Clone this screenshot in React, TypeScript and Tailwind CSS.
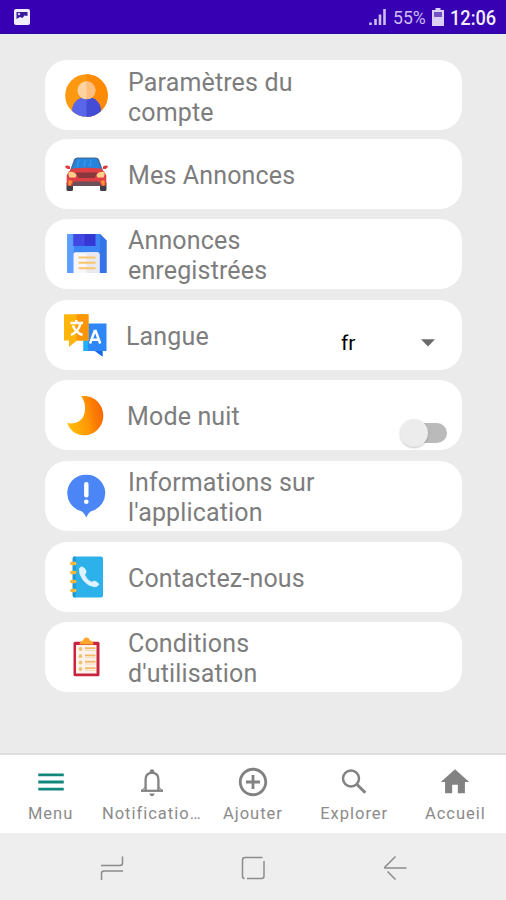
import type { ReactNode } from 'react';
import { MdAddCircleOutline, MdHome, MdMenu } from 'react-icons/md';

type MenuItem = {
  label: string;
  icon: ReactNode;
  textClass: string;
  extra?: ReactNode;
};

const iconClass = 'w-[44px] h-[44px] shrink-0';

const AccountIcon = () => (
  <svg viewBox="0 0 44 44" className={iconClass}>
    <defs>
      <clipPath id="avatar">
        <circle cx="22.5" cy="22.5" r="21.3" />
      </clipPath>
    </defs>
    <g clipPath="url(#avatar)">
      <rect width="44" height="44" fill="#ff9811" />
      <path d="M22.5 0H44v44H22.5z" fill="#ff8a05" />
      <path d="M8 44V38c0-8 6-14 14.5-14S37 30 37 38v6z" fill="#5a66ea" />
      <path d="M22.5 24C31 24 37 30 37 38v6H22.5z" fill="#444cd6" />
      <circle cx="22.5" cy="17.3" r="9" fill="#ffd3a0" />
      <path d="M22.5 8.3a9 9 0 0 1 0 18z" fill="#ffbe7e" />
    </g>
  </svg>
);

const CarIcon = () => (
  <svg viewBox="0 0 44 44" className={iconClass}>
    <rect x="2.5" y="30" width="6.5" height="9" rx="1.5" fill="#3f3f46" />
    <rect x="36" y="30" width="6.5" height="9" rx="1.5" fill="#3f3f46" />
    <path d="M10 7.5Q11 5.500 13.500 5.500H31.500Q34 5.500 35 7.500L39.500 20H5.500z" fill="#46698f" />
    <path d="M11.300 8.500Q11.800 6.500 13.500 6.500H31.500Q33.200 6.500 33.700 8.500L37.500 17.500H7.500z" fill="#2585dc" />
    <path d="M15 8l-2 7M21 8l-1 7M27 8l-1 7" stroke="#3c97e6" strokeWidth="1.3" />
    <path d="M1 14Q3.500 13 6 14.500v2.500H3.500Q1.500 16.500 1 14zM44 14Q41.500 13 39 14.500v2.500h2.500Q43.500 16.500 44 14z" fill="#e0393e" />
    <path d="M8 16.500Q22.500 15 37 16.500Q41 19.500 42.300 23.500V31.500Q42.300 34 40 34H5Q2.700 34 2.700 31.500V23.500Q4 19.500 8 16.500z" fill="#df4045" />
    <path d="M11.500 20.500h22L30.500 26H14.500z" fill="#87383c" />
    <path d="M4.500 20Q10 19 12.500 23L11.500 25.500H5.500Q4 23 4.500 20zM40.500 20Q35 19 32.500 23l1 2.500h6Q41 23 40.500 20z" fill="#ffd08a" />
    <path d="M10 29.500h25l2.500 4.500H7.500z" fill="#6b5059" />
    <path d="M4.500 28l4 1-2 4.500h-2zM40.500 28l-4 1 2 4.500h2z" fill="#f59a32" />
  </svg>
);

const SaveIcon = () => (
  <svg viewBox="0 0 44 44" className={iconClass}>
    <path d="M3.3 2H36L42.5 8.500V41H3.3z" fill="#3d84f5" />
    <path d="M3.3 2H10V41H3.3z" fill="#5c9dff" />
    <path d="M36 2l6.5 6.500V41H36z" fill="#3474e6" />
    <path d="M9.5 2H31.5V14H9.5z" fill="#3437d4" />
    <path d="M9.5 2H20.5V14H9.5z" fill="#4249e2" />
    <path d="M9.5 41V22.500Q9.5 20.300 11.5 20.300H33Q35.5 20.300 35.5 22.500V41z" fill="#f7f7f9" />
    <path d="M22.5 20.300H33Q35.5 20.300 35.5 22.500V41H22.5z" fill="#e9e9ef" />
    <path d="M14.5 25.500h17M14.5 30.800h17M14.5 36.200h17" stroke="#fbc56c" strokeWidth="1.9" />
  </svg>
);

const LanguageIcon = () => (
  <svg viewBox="0 0 44 44" className={iconClass}>
    <path d="M19.5 10.500H42.5V38H38.500V43.500L31 38H19.500z" fill="#2f86f6" />
    <path d="M19.500 20H24V38H19.500z" fill="#1fb0f5" />
    <path d="M31 38h7.500v5.500z" fill="#1768e0" />
    <path d="M0 1.300H24.500V27.500H13L5 34V27.500H0z" fill="#ffb50a" />
    <path d="M12.500 1.300h12V27.500h-12z" fill="#fb9608" />
    <path d="M6.500 10h12.500M12.300 7v3M16.500 10.500Q14.500 18.500 7 22M8.800 12.500Q11.500 19.500 18.500 22" fill="none" stroke="#fff" strokeWidth="2.400" />
    <path d="M26 30.500L30.700 18h1L36.200 30.500M27.800 26.800h7" fill="none" stroke="#fff" strokeWidth="2.500" />
  </svg>
);

const MoonIcon = () => (
  <svg viewBox="0 0 44 44" className={iconClass}>
    <defs>
      <linearGradient id="moon" x1="0" y1="0.6" x2="1" y2="0.4">
        <stop offset="0" stopColor="#ffbd08" />
        <stop offset="0.5" stopColor="#ff9a06" />
        <stop offset="0.75" stopColor="#fc7b04" />
        <stop offset="1" stopColor="#f56a00" />
      </linearGradient>
    </defs>
    <path d="M17.200 3.200C29.500 1.500 39.300 11 39.300 22.500C39.300 33.500 31 42.300 20 42.300C12 42.300 5.500 37.500 3.300 29.800C9 31.500 15.500 29.500 18.800 24.500C22.500 18 21.500 9 17.200 3.200z" fill="url(#moon)" />
  </svg>
);

const InfoIcon = () => (
  <svg viewBox="0 0 44 44" className={iconClass}>
    <path d="M22.300 0.700A18.500 18.500 0 0 1 27 37.200Q24.500 38.500 22.300 43.500Q20 38.500 17.500 37.200A18.500 18.500 0 0 1 22.300 0.700z" fill="#4c86f6" />
    <rect x="20.100" y="8" width="4.400" height="15.500" rx="2" fill="#fff" />
    <circle cx="22.300" cy="27.700" r="2.300" fill="#fff" />
  </svg>
);

const ContactIcon = () => (
  <svg viewBox="0 0 44 44" className={iconClass}>
    <rect x="8.700" y="1.500" width="30.300" height="41" rx="2" fill="#2cb1ea" />
    <path d="M8.700 3.500q0-2 2-2h1v41h-1q-2 0-2-2z" fill="#1d9ad6" />
    {[8.5, 17.5, 26.5, 35.5].map((y) => (
      <rect key={y} x="6" y={y - 1.7} width="6.500" height="3.400" rx="1.700" fill="#f8b739" />
    ))}
    <path d="M15.500 13.500Q16.500 11.500 18.500 12Q22 14 22.200 17Q21 19 20.700 20Q23 25.500 27.500 27.200L30.500 26Q34 27 34.800 29.500Q33.500 32 30.500 31.800Q24 31 19.500 25.500Q14.500 19 15.500 13.500z" fill="#def2ff" stroke="#def2ff" strokeWidth="0.800" />
  </svg>
);

const TermsIcon = () => (
  <svg viewBox="0 0 44 44" className={iconClass}>
    <rect x="9.500" y="6.700" width="26" height="34.500" rx="1.500" fill="#c9233f" />
    <rect x="12" y="10" width="20.500" height="28.500" fill="#fdf3ea" />
    <path d="M15.500 9.500Q15.500 6 19 5.500Q20 2.500 22.500 2.500T26 5.500Q29.500 6 29.500 9.500z" fill="#fca72c" />
    {[14, 21.2, 27.5, 34].map((y) => (
      <g key={y}>
        <circle cx="16.500" cy={y} r="1.900" fill="#efc177" />
        <path d={`M21 ${y - 0.8}h10.500`} stroke="#f4b767" strokeWidth="1.800" />
        <path d={`M21 ${y + 1.5}h10.500`} stroke="#f4dcbb" strokeWidth="1" />
      </g>
    ))}
  </svg>
);

const BellIcon = ({ className }: { className?: string }) => (
  <svg viewBox="0 0 34 34" className={className} fill="none" stroke="currentColor">
    <path d="M10.600 25V14.500Q10.600 7.800 17 7.800T23.400 14.500V25" strokeWidth="2.300" />
    <path d="M6 26.800v-1.300l3.700-3.500h1M28 26.800v-1.300L24.300 22h-1" fill="currentColor" stroke="none" />
    <path d="M6 25.800h22" strokeWidth="2.200" />
    <path d="M14.700 8V6.500Q14.700 4.200 17 4.200T19.300 6.500V8z" fill="currentColor" stroke="none" />
    <path d="M14.300 28.600h5.400q-0.500 2.600-2.700 2.600t-2.700-2.600z" fill="currentColor" stroke="none" />
  </svg>
);

const SearchIcon = ({ className }: { className?: string }) => (
  <svg viewBox="0 0 34 34" className={className} fill="none" stroke="currentColor">
    <circle cx="14" cy="13.500" r="8" strokeWidth="2.500" />
    <path d="M19.500 19L28.300 27.800" strokeWidth="3" />
  </svg>
);

const LanguageSelect = () => (
  <div className="ml-auto mt-[16px] flex items-center pr-[27px]">
    <span className="w-[80px] text-[21px] leading-6 text-black">fr</span>
    <svg viewBox="0 0 14 8" className="h-[8px] w-[14px]">
      <path d="M0 0.300h14L7 7.500z" fill="#6b6b6b" />
    </svg>
  </div>
);

const NightSwitch = () => (
  <div className="mr-[15px] mb-[3px] ml-auto flex items-center self-end">
    <span className="z-10 h-[28px] w-[28px] rounded-full bg-[#ececec] shadow-[0_1px_2px_rgba(0,0,0,0.22)]" />
    <span className="-ml-[18px] h-[20px] w-[37px] rounded-full bg-[#bababa]" />
  </div>
);

const items: MenuItem[] = [
  { label: 'Paramètres du compte', icon: <AccountIcon />, textClass: 'ml-[20px] mt-[5px] w-[200px]' },
  { label: 'Mes Annonces', icon: <CarIcon />, textClass: 'ml-[20px] mt-[4px]' },
  { label: 'Annonces enregistrées', icon: <SaveIcon />, textClass: 'ml-[20px] mt-[4px] w-[200px]' },
  { label: 'Langue', icon: <LanguageIcon />, textClass: 'ml-[18px] mt-[4px]', extra: <LanguageSelect /> },
  { label: 'Mode nuit', icon: <MoonIcon />, textClass: 'ml-[19px] mt-[4px]', extra: <NightSwitch /> },
  { label: "Informations sur l'application", icon: <InfoIcon />, textClass: 'ml-[20px] mt-[4px] w-[200px]' },
  { label: 'Contactez-nous', icon: <ContactIcon />, textClass: 'ml-[20px] mt-[4px]' },
  { label: "Conditions d'utilisation", icon: <TermsIcon />, textClass: 'ml-[20px] mt-[4px] w-[160px]' },
];

const tabs = [
  { label: 'Menu', Icon: MdMenu, active: true },
  { label: 'Notificatio…', Icon: BellIcon },
  { label: 'Ajouter', Icon: MdAddCircleOutline },
  { label: 'Explorer', Icon: SearchIcon },
  { label: 'Accueil', Icon: MdHome },
];

function StatusBar() {
  return (
    <div className="flex h-[34px] items-center border-b border-[#2a0aa0] bg-[#3700b3] pl-[14px] pr-[10px]">
      <svg viewBox="0 0 16 16" className="h-[16px] w-[16px]">
        <rect width="16" height="16" rx="2" fill="#f1ecfb" />
        <path d="M2.500 3h11v4l-3-0.500-2 2.500-2.500-1L2.500 10z" fill="#3a1a9c" />
        <circle cx="5" cy="5" r="1.200" fill="#d9cdf2" />
      </svg>
      <div className="ml-auto flex items-center pt-[3px]">
        <svg viewBox="0 0 18 18" className="-mt-[2px] h-[18px] w-[18px]">
          <path d="M1.500 14.500v2.500M6.500 11v6M11 6.500v10.500M15.500 1v16" stroke="#cdbcf0" strokeWidth="2.600" />
        </svg>
        <span className="ml-[6px] w-[34px] origin-left scale-x-[0.930] whitespace-nowrap text-[19px] leading-6 text-[#cdbcf0]">55%</span>
        <svg viewBox="0 0 12 18" className="-mt-[3px] ml-[5px] h-[18px] w-[12px]">
          <path d="M3.500 0h5v2H12v16H0V2h3.500z" fill="#dccff5" />
          <path d="M2 4h8v5H2z" fill="#7650c6" />
        </svg>
        <span className="ml-[6px] w-[46px] origin-left scale-x-[0.910] whitespace-nowrap text-[20px] font-medium leading-6 text-[#f3edff]">12:06</span>
      </div>
    </div>
  );
}

function TabBar() {
  return (
    <div className="grid h-[80px] grid-cols-5 border-t-2 border-[#dedede] bg-white">
      {tabs.map(({ label, Icon, active }) => (
        <div key={label} className="flex flex-col items-center pt-[10px]">
          <Icon className={active ? 'h-[34px] w-[34px] text-[#12877c]' : 'h-[34px] w-[34px] text-[#828282]'} />
          <span className="mt-[5px] whitespace-nowrap text-[16.5px] leading-[20px] tracking-[1px] text-[#8b8b8b]">{label}</span>
        </div>
      ))}
    </div>
  );
}

function SystemBar() {
  return (
    <div className="flex h-[67px] items-center justify-between bg-[#eeeeee] px-[98px]">
      <svg viewBox="0 0 28 28" className="h-[28px] w-[28px]" fill="none" stroke="#8c8c8c" strokeWidth="1.500">
        <path d="M3 12.500h19q2.500 0 2.500-2.500V3.500M25 18H6q-2.500 0-2.500 2.500V27" />
      </svg>
      <svg viewBox="0 0 28 28" className="h-[28px] w-[28px]" fill="none" stroke="#8c8c8c" strokeWidth="1.500">
        <path d="M23.500 4.500H6Q3.500 4.500 3.500 7V23Q3.500 25.500 5.500 25.500M8 25.500H22.500Q25 25.500 25 23V8" />
      </svg>
      <svg viewBox="0 0 28 28" className="h-[28px] w-[28px]" fill="none" stroke="#8c8c8c" strokeWidth="1.500">
        <path d="M26.500 15H5M15.500 3.500L5 14Q4.500 15 5 15.500M7.500 18.500L15.500 26.500" />
      </svg>
    </div>
  );
}

export default function App() {
  return (
    <div className="flex h-[900px] w-[506px] flex-col overflow-hidden bg-[#ebebeb] font-['Roboto',sans-serif]">
      <StatusBar />
      <main className="flex flex-1 flex-col gap-[10.6px] px-[45px] pt-[26.4px]">
        {items.map(({ label, icon, textClass, extra }, i) => (
          <div
            key={label}
            className={`flex h-[70px] w-[417px] shrink-0 items-center rounded-[22px] bg-white pl-[19px] ${i === 0 ? '-mb-[2.4px]' : ''}`}
          >
            {icon}
            <span className={`text-[25px] leading-[30px] tracking-[0.15px] text-[#7d7d7d] ${textClass}`}>{label}</span>
            {extra}
          </div>
        ))}
      </main>
      <TabBar />
      <SystemBar />
    </div>
  );
}
